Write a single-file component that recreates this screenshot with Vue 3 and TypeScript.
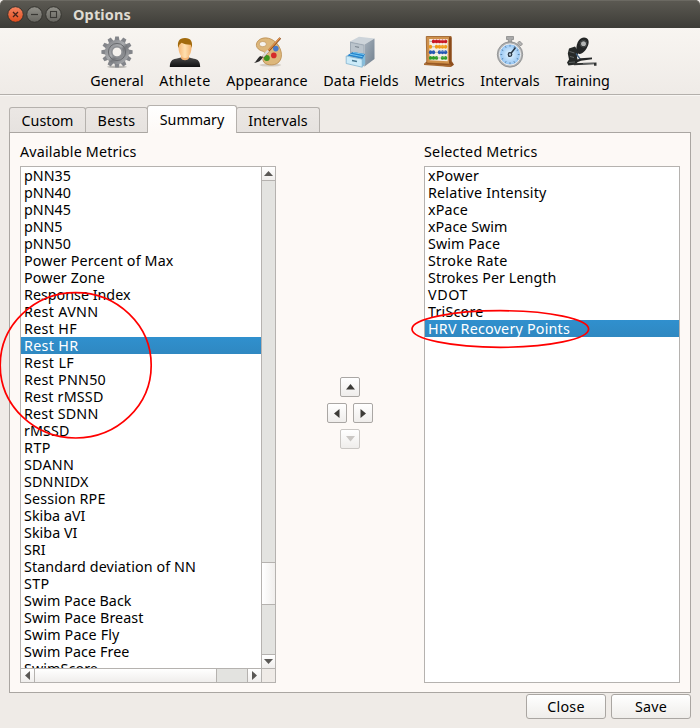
<script setup lang="ts">
interface Label {
  text: string
  width: number
}
interface Tool extends Label {
  icon: string
}

const L = (text: string, width: number): Label => ({ text, width })

const tools: Tool[] = [
  { icon: 'general', text: 'General', width: 52.5 },
  { icon: 'athlete', text: 'Athlete', width: 50.5 },
  { icon: 'appearance', text: 'Appearance', width: 80.5 },
  { icon: 'fields', text: 'Data Fields', width: 74.5 },
  { icon: 'metrics', text: 'Metrics', width: 49.5 },
  { icon: 'intervals', text: 'Intervals', width: 58.5 },
  { icon: 'training', text: 'Training', width: 53.5 },
]

const tabs = [L('Custom', 51), L('Bests', 37), L('Summary', 63.5), L('Intervals', 58.5)]
const activeTab = 'Summary'

const available = [
  L('pNN35', 46), L('pNN40', 46), L('pNN45', 46), L('pNN5', 37.5), L('pNN50', 46),
  L('Power Percent of Max', 148.5), L('Power Zone', 80), L('Response Index', 105.5),
  L('Rest AVNN', 73.5), L('Rest HF', 52), L('Rest HR', 53.5), L('Rest LF', 49),
  L('Rest PNN50', 81), L('Rest rMSSD', 78.5), L('Rest SDNN', 73.5), L('rMSSD', 44.5),
  L('RTP', 26), L('SDANN', 49), L('SDNNIDX', 63.5), L('Session RPE', 80.5),
  L('Skiba aVI', 60.5), L('Skiba VI', 52.5), L('SRI', 20.5), L('Standard deviation of NN', 171),
  L('STP', 24.5), L('Swim Pace Back', 106.5), L('Swim Pace Breast', 118.5),
  L('Swim Pace Fly', 94.5), L('Swim Pace Free', 104.5), L('SwimScore', 73),
]
const selected = [
  L('xPower', 50), L('Relative Intensity', 117.5), L('xPace', 39), L('xPace Swim', 78.5),
  L('Swim Pace', 71), L('Stroke Rate', 78.5), L('Strokes Per Length', 127.5), L('VDOT', 39),
  L('TriScore', 54.5), L('HRV Recovery Points', 141),
]
const currentAvailable = 'Rest HR'
const currentSelected = 'HRV Recovery Points'

const ctx = document.createElement('canvas').getContext('2d')!

// Letter spacing that sets a label to its nominal width.
function track(label: Label, bold = false) {
  ctx.font = `${bold ? 'bold 14.5px' : '14.3px'} "Noto Sans", sans-serif`
  const natural = ctx.measureText(label.text).width
  const spacing = (label.width + 1 - natural) / label.text.length
  return { letterSpacing: `${spacing.toFixed(3)}px` }
}

const teeth = Array.from({ length: 12 }, (_, i) => i * 30)
const ticks = Array.from({ length: 12 }, (_, i) => i * 30)
const beads = [
  { y: 5.4, c: '#c91522', xs: [10.5, 13.5, 16.5, 19.5, 22.5] },
  { y: 10.8, c: '#f09a16', xs: [7.5, 13.5, 16.5, 19.5, 22.5] },
  { y: 16.3, c: '#2457b3', xs: [7.5, 10.5, 16.5, 19.5, 22.5] },
  { y: 21.9, c: '#2e9c27', xs: [7.5, 10.5, 13.5, 19.5, 22.5] },
]
</script>

<template>
  <div class="window">
    <header class="titlebar">
      <svg class="controls" width="60" height="20" viewBox="0 0 60 20">
        <defs>
          <linearGradient id="closeFill" x1="0" y1="0" x2="0" y2="1">
            <stop offset="0" stop-color="#f58562" /><stop offset="1" stop-color="#df4c1c" />
          </linearGradient>
          <linearGradient id="ctlFill" x1="0" y1="0" x2="0" y2="1">
            <stop offset="0" stop-color="#92918a" /><stop offset="1" stop-color="#66655f" />
          </linearGradient>
        </defs>
        <g stroke="#34332e" stroke-width="1">
          <circle cx="10.5" cy="10.5" r="7.8" fill="url(#closeFill)" />
          <circle cx="29.5" cy="10.5" r="7.8" fill="url(#ctlFill)" />
          <circle cx="48.5" cy="10.5" r="7.8" fill="url(#ctlFill)" />
        </g>
        <path d="M8 8l5 5M13 8l-5 5" stroke="#44231a" stroke-width="1.3" />
        <path d="M26 10.5h7" stroke="#393834" stroke-width="1.2" />
        <rect x="45.5" y="7.5" width="6" height="6" fill="none" stroke="#393834" stroke-width="1.1" />
      </svg>
      <h1 :style="track(L('Options', 57), true)">Options</h1>
    </header>

    <nav class="toolbar">
      <button v-for="t in tools" :key="t.text" class="tool">
        <svg width="32" height="32" viewBox="0 0 32 32">
          <template v-if="t.icon === 'general'">
            <defs>
              <linearGradient id="steel" x1="0" y1="0" x2="1" y2="1">
                <stop offset="0" stop-color="#8c8e92" /><stop offset=".45" stop-color="#a9abae" />
                <stop offset=".6" stop-color="#76787c" /><stop offset="1" stop-color="#a4a6a9" />
              </linearGradient>
            </defs>
            <ellipse cx="16" cy="30.8" rx="10" ry="1.2" fill="#b9b7b3" />
            <path v-for="a in teeth" :key="a" d="M13.3 6L14.2 .4h3.600L18.700 6z" fill="#83858a" :transform="`rotate(${a} 16 16)`" />
            <circle cx="16" cy="16" r="8.4" fill="none" stroke="url(#steel)" stroke-width="7.4" />
            <circle cx="16" cy="16" r="8.6" fill="none" stroke="#6a6c70" stroke-width="1" />
            <circle cx="16" cy="16" r="5.3" fill="none" stroke="#8e9094" stroke-width="1.5" />
          </template>
          <template v-else-if="t.icon === 'athlete'">
            <defs>
              <linearGradient id="skin" x1="0" x2="1">
                <stop offset="0" stop-color="#f6b775" /><stop offset=".5" stop-color="#ffe0b0" />
                <stop offset="1" stop-color="#f3b26d" />
              </linearGradient>
              <linearGradient id="shirt" x1="0" y1="0" x2="0" y2="1">
                <stop offset="0" stop-color="#484848" /><stop offset="1" stop-color="#111" />
              </linearGradient>
            </defs>
            <path d="M.8 31C1 25 3 23.4 7 22.7l5-1.2h8l5 1.2c4 .7 6 2.3 6.2 8.3z" fill="url(#shirt)" />
            <path d="M12 18h8v4c-1 3-7 3-8 0z" fill="#f5b574" />
            <path d="M9.400 10C9.400 3 22.600 3 22.600 10c0 6-2 12-6.600 12S9.400 16 9.400 10z" fill="url(#skin)" />
            <path d="M9.300 12C8 6 10 2 16 2S24 6 22.700 12l-.9-3.200c-3 .2-7-.8-9.300-2L10.200 9z" fill="#a26a0c" />
          </template>
          <template v-else-if="t.icon === 'appearance'">
            <g transform="translate(2.3 .6)">
              <ellipse cx="17" cy="28.500" rx="11" ry="1.500" fill="#d4cdc4" />
              <path d="M7 2.500c7-3.500 15 1 18.500 7C30 17 29 26 21 28 14 29.500 8 26 10 21c2-4 3-5-1-6.500C2 12.500 1 6 7 2.500z" fill="#ddb77b" stroke="#b98a4c" stroke-width=".8" />
              <ellipse cx="9.500" cy="7.500" rx="3.600" ry="2.600" fill="#f6f3ee" stroke="#b98a4c" stroke-width=".6" />
              <circle cx="22.500" cy="12" r="2.800" fill="#4779ca" />
              <circle cx="20.500" cy="18.800" r="2.800" fill="#d52b2b" />
              <circle cx="13.500" cy="21.500" r="3" fill="#3c941e" />
              <path d="M27 1.500L9.500 20.500" stroke="#8d4b1c" stroke-width="2.200" />
              <path d="M26.500 1.500L11 18" stroke="#e99a50" stroke-width="1.200" />
              <path d="M15 14L9.500 20" stroke="#dad8d6" stroke-width="2.400" />
              <path d="M9.800 20.500C8 24 5 26 .8 26.500c2-1.300 3-4.500 6-7z" fill="#2d2c2c" />
            </g>
          </template>
          <template v-else-if="t.icon === 'fields'">
            <defs>
              <linearGradient id="cabSide" x1="0" y1="0" x2="1" y2="1">
                <stop offset="0" stop-color="#a6b1bc" /><stop offset="1" stop-color="#71808e" />
              </linearGradient>
            </defs>
            <path d="M5 5.500L14 .8 29.500 2.500 19.500 8.500z" fill="#cdd4da" />
            <path d="M19.500 8.500L29.500 2.500v20.500l-10 7.500z" fill="url(#cabSide)" />
            <path d="M5 5.500l14.500 3v22L5 25z" fill="#9faab5" />
            <path d="M6 7l12.500 2.500V18L6 15.500z" fill="#bac3cb" />
            <path d="M10 10.500l4 .8" stroke="#7c8791" stroke-width="1.200" />
            <path d="M2 19.500l6-3.500 12 2-2.500 5z" fill="#2684cc" />
            <path d="M5 18.200l12.500 2.500M8 16.500l11 2" stroke="#75c7f1" stroke-width="1" />
            <path d="M1.200 20l16 3.200v8L1.200 27.500z" fill="#ccebf9" stroke="#81b4cf" stroke-width=".8" />
            <path d="M17.200 23.200l3-5v9.500l-3 3.500z" fill="#86bddb" />
            <path d="M7 24.500l5 1" stroke="#44758f" stroke-width="1.400" />
          </template>
          <template v-else-if="t.icon === 'metrics'">
            <path d="M1 27.500l3-2h25l2 3.200-3.200 2.300z" fill="#8d4d1c" />
            <path d="M1 27.500l27 1.800V31L1 29z" fill="#a96b31" />
            <path d="M3.300.5h24.800v27.700L3.800 27z" fill="#cf914b" stroke="#955822" stroke-width=".8" />
            <path d="M26 1l2.500.5v27L26 27.500z" fill="#8b4b1a" />
            <path d="M6.200 3h18.500v22.200l-18-1z" fill="#f6efe2" />
            <g v-for="b in beads" :key="b.y">
              <path :d="`M6.500 ${b.y}h18`" stroke="#9b9894" stroke-width=".7" />
              <ellipse v-for="x in b.xs" :key="x" :cx="x" :cy="b.y" rx="1.650" ry="1.950" :fill="b.c" />
              <path :d="`M${b.xs[2]} ${b.y - .8}h${b.xs[4] - b.xs[2]}`" stroke="#fff" stroke-opacity=".3" stroke-width=".8" />
            </g>
          </template>
          <template v-else-if="t.icon === 'intervals'">
            <defs>
              <radialGradient id="dial"><stop offset="0" stop-color="#e6f5ff" /><stop offset="1" stop-color="#92c4f4" /></radialGradient>
            </defs>
            <path d="M12.500.5h7v3h-1.800v4h-3.400v-4h-1.800z" fill="#aaa" stroke="#737373" stroke-width=".6" />
            <path d="M25.500 5l3 3-2 2-3-3z" fill="#b5b5b5" stroke="#777" stroke-width=".7" />
            <circle cx="16" cy="18.500" r="12.700" fill="#aeafb0" stroke="#818284" stroke-width=".7" />
            <circle cx="16" cy="18.500" r="10.600" fill="url(#dial)" stroke="#ececec" stroke-width="1" />
            <path v-for="a in ticks" :key="a" d="M16 9v1.700" stroke="#42688d" stroke-width=".7" :transform="`rotate(${a} 16 18.500)`" />
            <path d="M14.500 20.500L21.500 11.500" stroke="#263442" stroke-width="1.500" />
            <circle cx="16" cy="18.500" r="1.800" fill="#b5c6d5" stroke="#263442" stroke-width="1.200" />
          </template>
          <template v-else>
            <path d="M1.800 17.500L3 12.500 9 10.500l3.500 5 -1.500 6 1 3.500-2 3.500-7.500 1-1.500-3 2-3z" fill="#262928" />
            <path d="M10.500 10.500C11.500 5 14 1.500 18 1.500c4.500 0 5.500 4 4 8-1.500 3.500-4 7.500-8 8.500-3 .5-4-4-3.500-7.500z" fill="#242626" />
            <circle cx="17.500" cy="7.700" r="2.500" fill="#b4b6b5" />
            <circle cx="17.500" cy="7.700" r="3.400" fill="none" stroke="#4a4d4d" stroke-width=".9" />
            <path d="M3.500 15.500l5 1.500M4 20.500l4 1M3 26.500l6-.5" stroke="#5f6464" stroke-width="1" />
            <path d="M10 17.500l4.500 6" stroke="#416183" stroke-width="1.300" />
            <path d="M9.500 24.500l5-2.200 11.500-.8v1.800l-11 1.400-5 2z" fill="#252727" />
            <path d="M7 27.300l23.500-.8v3.300h-2.500v-1.600l-20 1z" fill="#303232" />
            <path d="M17 27.300h11" stroke="#8a8d8c" stroke-width=".7" />
          </template>
        </svg>
        <span :style="track(t)">{{ t.text }}</span>
      </button>
    </nav>

    <main class="content">
      <div class="tabs">
        <button v-for="t in tabs" :key="t.text" class="tab" :class="{ active: t.text === activeTab }">
          <span :style="track(t)">{{ t.text }}</span>
        </button>
      </div>

      <section class="pane">
        <div class="column">
          <label><span :style="track(L('Available Metrics', 115.5))">Available Metrics</span></label>
          <div class="list scrolling">
            <ul>
              <li v-for="m in available" :key="m.text" :class="{ current: m.text === currentAvailable }">
                <span :style="track(m)">{{ m.text }}</span>
              </li>
            </ul>
            <div class="vbar">
              <div class="step"><svg width="9" height="5" viewBox="0 0 9 5"><path d="M0 5L4.500 0 9 5z" /></svg></div>
              <div class="vtrack"><div class="vthumb"></div></div>
              <div class="step"><svg width="9" height="5" viewBox="0 0 9 5"><path d="M0 0L4.500 5 9 0z" /></svg></div>
            </div>
            <div class="hbar">
              <div class="step"><svg width="5" height="9" viewBox="0 0 5 9"><path d="M5 0L0 4.500 5 9z" /></svg></div>
              <div class="htrack"><div class="hthumb"></div></div>
              <div class="step"><svg width="5" height="9" viewBox="0 0 5 9"><path d="M0 0L5 4.500 0 9z" /></svg></div>
            </div>
            <div class="corner"></div>
          </div>
        </div>

        <div class="movers">
          <button class="mover"><svg width="9" height="6" viewBox="0 0 9 6"><path d="M0 5.500L4.500 0 9 5.500z" /></svg></button>
          <div class="pair">
            <button class="mover"><svg width="6" height="9" viewBox="0 0 6 9"><path d="M5.500 0L0 4.500 5.500 9z" /></svg></button>
            <button class="mover"><svg width="6" height="9" viewBox="0 0 6 9"><path d="M.5 0L6 4.500 .5 9z" /></svg></button>
          </div>
          <button class="mover off" disabled><svg width="9" height="6" viewBox="0 0 9 6"><path d="M0 0L4.500 5.500 9 0z" /></svg></button>
        </div>

        <div class="column">
          <label><span :style="track(L('Selected Metrics', 112.5))">Selected Metrics</span></label>
          <div class="list">
            <ul>
              <li v-for="m in selected" :key="m.text" :class="{ current: m.text === currentSelected }">
                <span :style="track(m)">{{ m.text }}</span>
              </li>
            </ul>
          </div>
        </div>
      </section>
    </main>

    <footer class="actions">
      <button class="action"><span :style="track(L('Close', 36.5))">Close</span></button>
      <button class="action"><span :style="track(L('Save', 31))">Save</span></button>
    </footer>

    <svg class="annotations" width="700" height="728" viewBox="0 0 700 728">
      <ellipse cx="75.700" cy="365.300" rx="75.500" ry="72.700" />
      <ellipse cx="500.300" cy="329" rx="88.300" ry="18.300" />
    </svg>
  </div>
</template>

<style>
body {
  margin: 0;
  background: #efebe7;
}
</style>

<style scoped>
.window {
  position: relative;
  display: flex;
  flex-direction: column;
  width: 700px;
  height: 728px;
  overflow: hidden;
  background: #efebe7;
  color: #000;
  font: 14.3px/17px 'Noto Sans', sans-serif;
}
.window * {
  box-sizing: border-box;
}
span {
  white-space: pre;
}
button {
  margin: 0;
  padding: 0;
  border: 0;
  background: none;
  color: inherit;
  font: inherit;
}
.titlebar {
  display: flex;
  align-items: center;
  height: 28px;
  padding: 0 0 0 5px;
  border-radius: 5px 5px 0 0;
  background: linear-gradient(#5c5a53, #3d3c37);
  box-shadow: inset 0 1px #6b6962;
}
.controls {
  display: block;
  flex: none;
}
h1 {
  margin: 0 0 0 8px;
  color: #dfdbd2;
  font-size: 14.5px;
  line-height: 20px;
  white-space: pre;
}
.toolbar {
  display: flex;
  flex: none;
  gap: 16px;
  height: 67px;
  padding: 8px 0 0 90px;
  border-bottom: 1px solid #b3afab;
  background: linear-gradient(#f8f5f1, #efebe7);
}
.tool {
  display: flex;
  flex-direction: column;
  align-items: center;
}
.tool svg {
  display: block;
}
.tool span {
  margin: 4px -1px 0 0;
  height: 17px;
}
.tool:nth-child(1) { width: 53px; }
.tool:nth-child(2) { width: 51px; }
.tool:nth-child(3) { width: 81px; }
.tool:nth-child(4) { width: 75px; }
.tool:nth-child(5) { width: 50px; }
.tool:nth-child(6) { width: 59px; }
.tool:nth-child(7) { width: 54px; }
.content {
  display: flex;
  flex-direction: column;
  padding: 9px 9px 0;
  border-top: 1px solid #f8f6f3;
}
.tabs {
  display: flex;
  align-items: flex-end;
  height: 27px;
}
.tab {
  height: 25px;
  margin-left: -1px;
  border: 1px solid #b5b1ad;
  border-bottom: 0;
  border-radius: 3px 3px 0 0;
  background: linear-gradient(#ebe7e4, #e6e2df);
}
.tab:nth-child(1) { width: 77px; margin-left: 0; }
.tab:nth-child(2) { width: 63px; }
.tab:nth-child(3) { width: 90px; }
.tab:nth-child(4) { width: 84px; }
.tab.active {
  position: relative;
  height: 28px;
  margin-bottom: -1px;
  background: linear-gradient(#fff, #fdf9f6);
}
.pane {
  display: flex;
  width: 682px;
  height: 561px;
  padding: 10px 10px 0;
  border: 1px solid #aaa6a2;
  background: #fdf9f6;
}
.column {
  width: 256px;
}
label {
  display: block;
  height: 23px;
}
.list {
  width: 256px;
  height: 517px;
  border: 1px solid #b5b2af;
  background: #fff;
}
.scrolling {
  display: grid;
  grid-template-columns: 240px 14px;
  grid-template-rows: 501px 14px;
}
ul {
  margin: 0;
  padding: 0;
  overflow: hidden;
  list-style: none;
}
li {
  height: 17px;
  padding-left: 3px;
}
li.current {
  background: linear-gradient(#3090ce, #2f88c1);
  color: #fff;
}
.vbar {
  display: flex;
  flex-direction: column;
  border-left: 1px solid #b5b2af;
}
.step {
  display: flex;
  flex: none;
  align-items: center;
  justify-content: center;
  width: 13px;
  height: 13px;
  background: linear-gradient(#fff, #f0eeec);
}
.step svg {
  display: block;
  fill: #5a5855;
}
.vtrack {
  flex: 1;
  padding-top: 381px;
  border: solid #b5b2af;
  border-width: 1px 0;
  background: #e3e3e0;
}
.vthumb {
  height: 43px;
  border: solid #b5b2af;
  border-width: 1px 0;
  background: linear-gradient(90deg, #fff, #f0eeec);
}
.hbar {
  display: flex;
  border-top: 1px solid #b5b2af;
}
.htrack {
  flex: 1;
  border: solid #b5b2af;
  border-width: 0 1px;
  background: #e3e3e0;
}
.hthumb {
  width: 182px;
  height: 13px;
  border-right: 1px solid #b5b2af;
  background: linear-gradient(#fff, #f0eeec);
}
.corner {
  border: solid #b5b2af;
  border-width: 1px 0 0 1px;
  background: #efebe7;
}
.movers {
  display: flex;
  flex-direction: column;
  align-items: center;
  gap: 6px;
  width: 148px;
  padding-top: 234px;
}
.pair {
  display: flex;
  gap: 6px;
}
.mover {
  display: flex;
  align-items: center;
  justify-content: center;
  width: 20px;
  height: 20px;
  border: 1px solid #aaa7a4;
  border-radius: 2px;
  background: linear-gradient(#fff, #efedeb);
}
.mover svg {
  fill: #3c3b37;
}
.mover.off {
  border-color: #cac7c4;
}
.mover.off svg {
  fill: #cac7c4;
}
.actions {
  display: flex;
  justify-content: flex-end;
  gap: 5px;
  padding: 1px 9px 0 0;
}
.action {
  width: 80px;
  height: 25px;
  border: 1px solid #aaa6a2;
  border-radius: 3px;
  background: linear-gradient(#fff, #efedea);
}
.annotations {
  position: absolute;
  top: 0;
  left: 0;
  fill: none;
  stroke: #f00;
  stroke-width: 1.700;
  pointer-events: none;
}
</style>
